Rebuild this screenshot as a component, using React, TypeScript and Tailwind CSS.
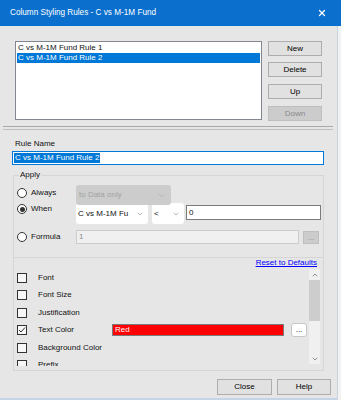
import { ChevronDown, ChevronUp, X } from 'lucide-react';

const Btn = ({ label, disabled, className = '' }: any) => (
    <div
        className={`flex items-center justify-center border leading-none ${
            disabled ? 'border-[#bfbfbf] bg-[#cccccc] text-[#8a8a8a]' : 'border-[#adadad] bg-[#e1e1e1] text-black'
        } ${className}`}
    >
        {label}
    </div>
);

const Radio = ({ checked }: any) => (
    <div className="w-[10px] h-[10px] rounded-full border border-[#333333] bg-white flex items-center justify-center shrink-0">
        {checked && <div className="w-[5px] h-[5px] rounded-full bg-[#333333]" />}
    </div>
);

const Check = ({ checked }: any) => (
    <div className="w-[10px] h-[10px] border border-[#333333] bg-[#f7f7f7] shrink-0 flex items-center justify-center">
        {checked && (
            <svg width="8" height="8" viewBox="0 0 8 8">
                <path d="M1 4 L3 6 L7 1.5" fill="none" stroke="#333" strokeWidth="1" />
            </svg>
        )}
    </div>
);

const rows = ['Font', 'Font Size', 'Justification', 'Text Color', 'Background Color', 'Prefix'];

function App() {
    return (
        <div className="w-[341px] h-[400px] overflow-hidden bg-[#e6e6e6] font-['Liberation_Sans',Arial,sans-serif] text-[8px] text-[#111111] flex flex-col">
            {/* title bar */}
            <div className="h-[26px] shrink-0 bg-[#0b6fcd] flex items-center pl-[10px] pr-[14px] text-white">
                <span className="flex-1 text-[8.2px]">Column Styling Rules - C vs M-1M Fund</span>
                <X size={10} strokeWidth={3} />
            </div>

            <div className="flex-1 flex">
                <div className="w-[338px] flex flex-col border-r border-[#c9d3df]">
                    {/* rules list + buttons */}
                    <div className="flex mt-[15px] ml-[15px]">
                        <div className="w-[247px] h-[79px] border border-[#828790] bg-white p-px">
                            <div className="h-[10px] leading-[10px] pl-px">C vs M-1M Fund Rule 1</div>
                            <div className="h-[10px] leading-[10px] pl-px bg-[#0078d7] text-white">C vs M-1M Fund Rule 2</div>
                        </div>
                        <div className="ml-[6px] w-[54px] flex flex-col">
                            <Btn label="New" className="h-[15px]" />
                            <Btn label="Delete" className="h-[15px] mt-[6px]" />
                            <Btn label="Up" className="h-[15px] mt-[7px]" />
                            <Btn label="Down" disabled className="h-[15px] mt-[7px]" />
                        </div>
                    </div>

                    {/* separator */}
                    <div className="ml-[3px] w-[330px] mt-[5px] h-[4px] border-t border-b border-t-[#a9a9a9] border-b-[#bdbdbd]" />

                    {/* rule name */}
                    <div className="ml-[15px] mt-[9px] h-[10px] leading-[10px]">Rule Name</div>
                    <div className="ml-[12px] mt-[2px] w-[312px] h-[14px] border border-[#0078d7] bg-white flex items-center pl-px">
                        <span className="bg-[#0078d7] text-white leading-[10px] px-px">C vs M-1M Fund Rule 2</span>
                    </div>

                    {/* apply group */}
                    <div className="ml-[13px] mt-[10px] w-[311px] h-[83px] border border-[#d6d6d6] flex flex-col">
                        <div className="-mt-[6px] ml-[5px] w-fit px-px leading-[10px] bg-[#e6e6e6]">Apply</div>

                        <div className="flex mt-[5px] h-[18px]">
                            <div className="w-[62px] flex items-center h-fit mt-[3px] pl-[3px] gap-[4px]">
                                <Radio />
                                <span className="leading-[10px]">Always</span>
                            </div>
                            <div className="relative z-10 w-[95px] h-[20px] rounded-[3px] bg-[#cccccc] text-[#a3a3a3] flex items-center justify-between pl-[3px] pr-[5px]">
                                <span>to Data only</span>
                                <ChevronDown size={9} strokeWidth={1.5} />
                            </div>
                        </div>

                        <div className="flex h-[21px]">
                            <div className="w-[62px] flex items-center h-fit mt-px pl-[3px] gap-[4px]">
                                <Radio checked />
                                <span className="leading-[10px]">When</span>
                            </div>
                            <div className="w-[72px] h-[21px] rounded-[3px] bg-white flex items-center justify-between pl-[2px] pr-[4px]">
                                <span>C vs M-1M Fu</span>
                                <ChevronDown size={8} strokeWidth={1.5} className="text-[#6f6f6f]" />
                            </div>
                            <div className="ml-[4px] w-[32px] h-[21px] rounded-[3px] bg-white flex items-center justify-between pl-[2px] pr-[4px]">
                                <span>&lt;</span>
                                <ChevronDown size={8} strokeWidth={1.5} className="text-[#6f6f6f]" />
                            </div>
                            <div className="ml-[2px] mt-[2px] w-[135px] h-[15px] border border-[#7a7a7a] bg-white flex items-center pl-[2px]">0</div>
                        </div>

                        <div className="flex mt-[6px] h-[14px]">
                            <div className="w-[62px] flex items-center h-fit mt-[2px] pl-[3px] gap-[4px]">
                                <Radio />
                                <span className="leading-[10px]">Formula</span>
                            </div>
                            <div className="w-[223px] h-[14px] border border-[#cccccc] bg-[#f0f0f0] text-[#8c8c8c] flex items-center pl-[2px]">1</div>
                            <div className="ml-[4px] mt-px w-[16px] h-[13px] border border-[#bfbfbf] bg-[#cccccc] text-[#8a8a8a] flex items-center justify-center leading-none">...</div>
                        </div>
                    </div>

                    {/* formatting list */}
                    <div className="ml-[13px] w-[311px] h-[113px] border-x border-b border-[#d6d6d6] flex flex-col">
                        <div className="h-[10px] leading-[10px] text-right pr-[6px]">
                            <span className="text-[#0000ff] underline">Reset to Defaults</span>
                        </div>
                        <div className="flex mt-px h-[98px]">
                            <div className="flex-1 overflow-hidden flex flex-col h-[97px]">
                                {rows.map((r) => (
                                    <div key={r} className="h-[17.5px] shrink-0 flex items-center pl-[3px]">
                                        <Check checked={r === 'Text Color'} />
                                        <span className="ml-[11px] w-[74px] whitespace-nowrap">{r}</span>
                                        {r === 'Text Color' && (
                                            <>
                                                <div className="w-[172px] h-[12px] border border-[#7a7a7a] bg-[#ff0000] text-white flex items-center pl-[2px]">Red</div>
                                                <div className="ml-[7px] w-[16px] h-[14px] rounded-[3px] border border-[#c8c8c8] bg-white flex items-center justify-center leading-none">...</div>
                                            </>
                                        )}
                                    </div>
                                ))}
                            </div>
                            <div className="w-[11px] h-[95px] mr-[3px] bg-[#f0f0f0] flex flex-col items-center">
                                <ChevronUp size={8} strokeWidth={2} className="text-[#606060] mt-[2px]" />
                                <div className="w-[11px] h-[41px] mt-px bg-[#cdcdcd]" />
                                <ChevronDown size={8} strokeWidth={2} className="text-[#606060] mt-auto mb-[1px]" />
                            </div>
                        </div>
                    </div>

                    {/* bottom buttons */}
                    <div className="flex justify-end gap-[5px] pr-[6px] mt-[8px]">
                        <Btn label="Close" className="w-[55px] h-[16px]" />
                        <Btn label="Help" className="w-[54px] h-[16px]" />
                    </div>

                    <div className="mt-auto h-[2px] bg-[#c5d4e6]" />
                </div>
                <div className="flex-1 bg-[#f2f2f2]" />
            </div>
        </div>
    );
}

export default App;
